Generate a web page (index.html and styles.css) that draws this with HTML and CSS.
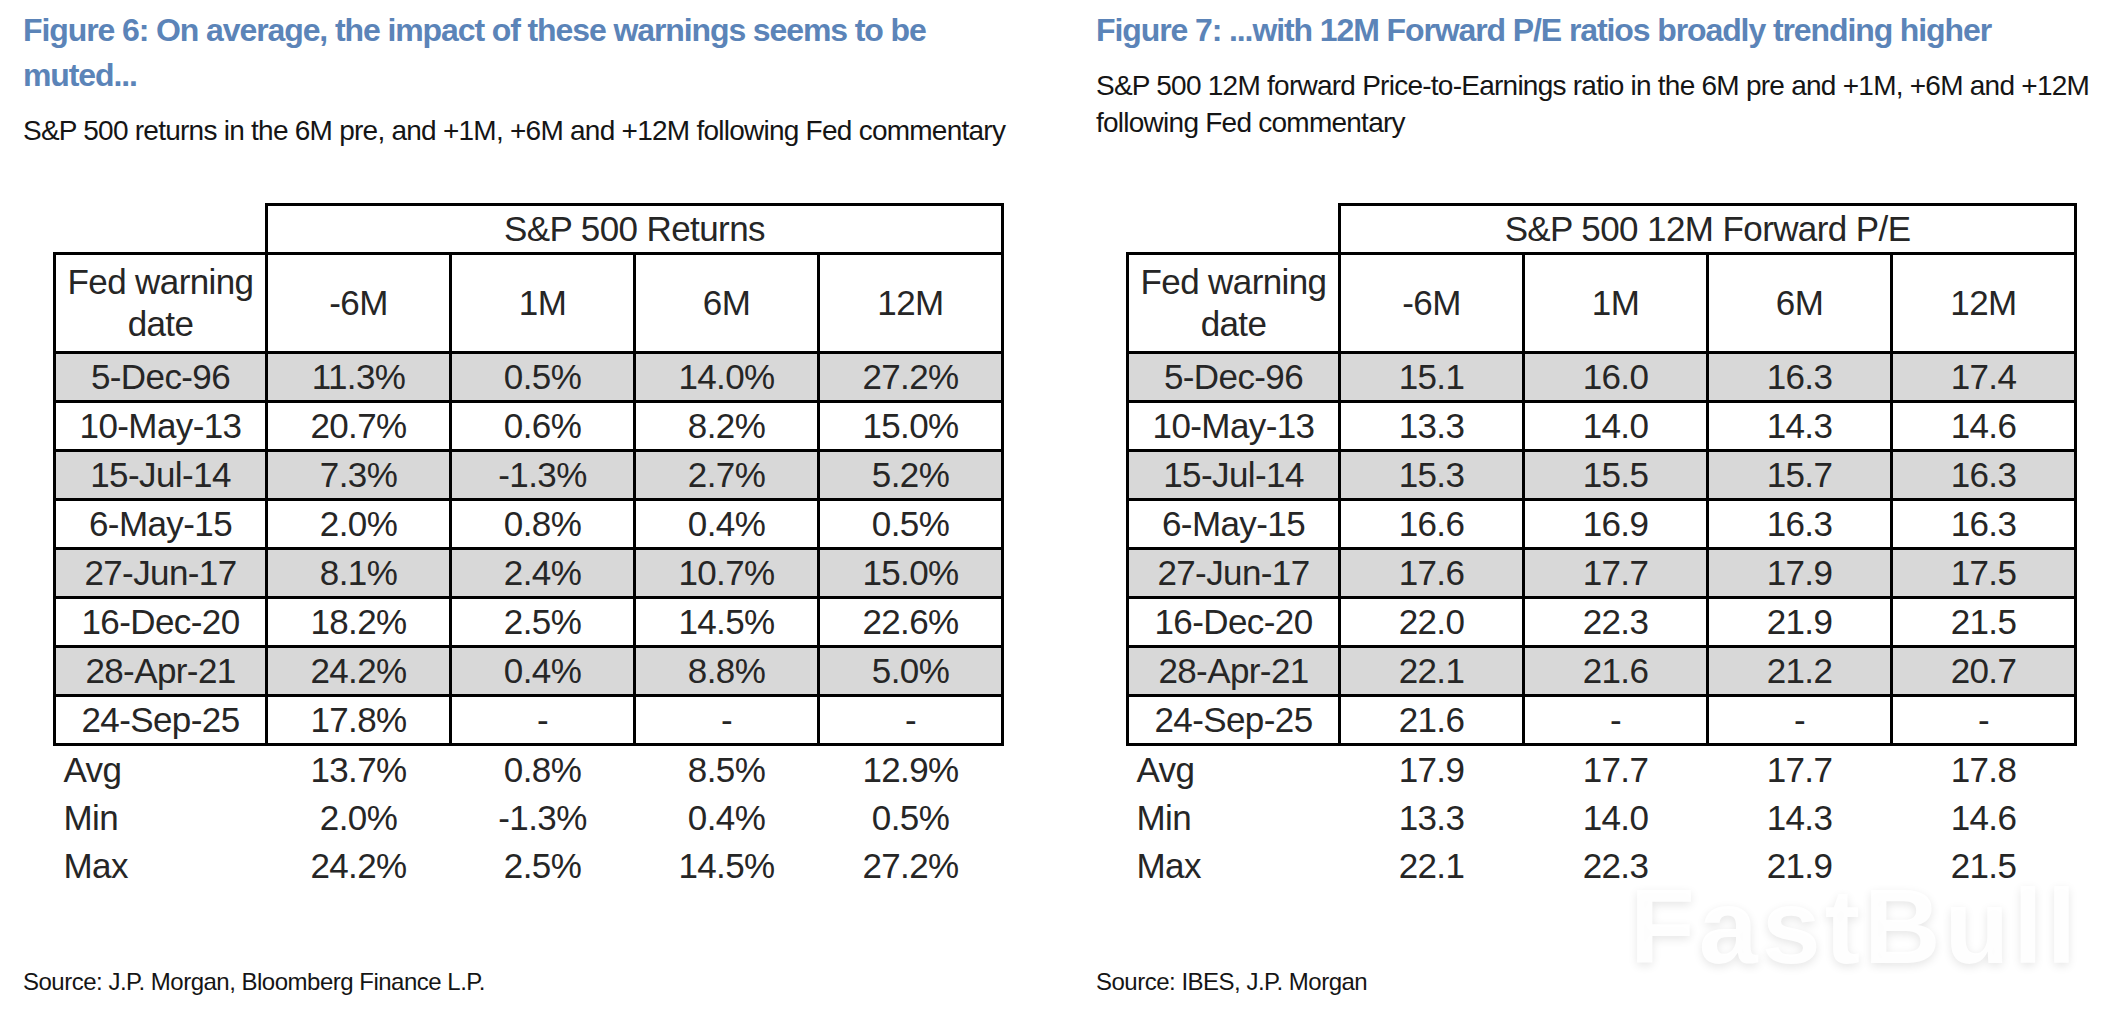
FILE: index.html
```html
<!DOCTYPE html>
<html lang="en">
<head>
<meta charset="utf-8">
<title>Fed warnings and S&amp;P 500</title>
<link rel="stylesheet" href="styles.css">
</head>
<body>
<div class="page">
  <div class="head">
    <h2 class="title">Figure 6: On average, the impact of these warnings seems to be muted...</h2>
    <p class="subtitle">S&amp;P 500 returns in the 6M pre, and +1M, +6M and +12M following Fed commentary</p>
  </div>
  <div class="head head-right">
    <h2 class="title">Figure 7: ...with 12M Forward P/E ratios broadly trending higher</h2>
    <p class="subtitle">S&amp;P 500 12M forward Price-to-Earnings ratio in the 6M pre and +1M, +6M and +12M following Fed commentary</p>
  </div>

  <table class="data">
    <colgroup><col class="c-date"><col class="c-val"><col class="c-val"><col class="c-val"><col class="c-val"></colgroup>
    <thead>
      <tr class="r-group"><th class="blank"></th><th colspan="4">S&amp;P 500 Returns</th></tr>
      <tr class="r-head"><th>Fed warning<br>date</th><th>-6M</th><th>1M</th><th>6M</th><th>12M</th></tr>
    </thead>
    <tbody>
      <tr class="shade"><td>5-Dec-96</td><td>11.3%</td><td>0.5%</td><td>14.0%</td><td>27.2%</td></tr>
      <tr><td>10-May-13</td><td>20.7%</td><td>0.6%</td><td>8.2%</td><td>15.0%</td></tr>
      <tr class="shade"><td>15-Jul-14</td><td>7.3%</td><td>-1.3%</td><td>2.7%</td><td>5.2%</td></tr>
      <tr><td>6-May-15</td><td>2.0%</td><td>0.8%</td><td>0.4%</td><td>0.5%</td></tr>
      <tr class="shade"><td>27-Jun-17</td><td>8.1%</td><td>2.4%</td><td>10.7%</td><td>15.0%</td></tr>
      <tr><td>16-Dec-20</td><td>18.2%</td><td>2.5%</td><td>14.5%</td><td>22.6%</td></tr>
      <tr class="shade"><td>28-Apr-21</td><td>24.2%</td><td>0.4%</td><td>8.8%</td><td>5.0%</td></tr>
      <tr><td>24-Sep-25</td><td>17.8%</td><td>-</td><td>-</td><td>-</td></tr>
    </tbody>
    <tbody class="stats">
      <tr><td>Avg</td><td>13.7%</td><td>0.8%</td><td>8.5%</td><td>12.9%</td></tr>
      <tr><td>Min</td><td>2.0%</td><td>-1.3%</td><td>0.4%</td><td>0.5%</td></tr>
      <tr><td>Max</td><td>24.2%</td><td>2.5%</td><td>14.5%</td><td>27.2%</td></tr>
    </tbody>
  </table>

  <table class="data">
    <colgroup><col class="c-date"><col class="c-val"><col class="c-val"><col class="c-val"><col class="c-val"></colgroup>
    <thead>
      <tr class="r-group"><th class="blank"></th><th colspan="4">S&amp;P 500 12M Forward P/E</th></tr>
      <tr class="r-head"><th>Fed warning<br>date</th><th>-6M</th><th>1M</th><th>6M</th><th>12M</th></tr>
    </thead>
    <tbody>
      <tr class="shade"><td>5-Dec-96</td><td>15.1</td><td>16.0</td><td>16.3</td><td>17.4</td></tr>
      <tr><td>10-May-13</td><td>13.3</td><td>14.0</td><td>14.3</td><td>14.6</td></tr>
      <tr class="shade"><td>15-Jul-14</td><td>15.3</td><td>15.5</td><td>15.7</td><td>16.3</td></tr>
      <tr><td>6-May-15</td><td>16.6</td><td>16.9</td><td>16.3</td><td>16.3</td></tr>
      <tr class="shade"><td>27-Jun-17</td><td>17.6</td><td>17.7</td><td>17.9</td><td>17.5</td></tr>
      <tr><td>16-Dec-20</td><td>22.0</td><td>22.3</td><td>21.9</td><td>21.5</td></tr>
      <tr class="shade"><td>28-Apr-21</td><td>22.1</td><td>21.6</td><td>21.2</td><td>20.7</td></tr>
      <tr><td>24-Sep-25</td><td>21.6</td><td>-</td><td>-</td><td>-</td></tr>
    </tbody>
    <tbody class="stats">
      <tr><td>Avg</td><td>17.9</td><td>17.7</td><td>17.7</td><td>17.8</td></tr>
      <tr><td>Min</td><td>13.3</td><td>14.0</td><td>14.3</td><td>14.6</td></tr>
      <tr><td>Max</td><td>22.1</td><td>22.3</td><td>21.9</td><td>21.5</td></tr>
    </tbody>
  </table>

  <p class="source">Source: J.P. Morgan, Bloomberg Finance L.P.</p>
  <p class="source">Source: IBES, J.P. Morgan</p>

  <div class="watermark">FastBull</div>
</div>
</body>
</html>
```

FILE: styles.css
```css
html, body {
  margin: 0;
  padding: 0;
  background: #ffffff;
}

body {
  font-family: "Liberation Sans", Arial, sans-serif;
  color: #1c1c1c;
}

.page {
  position: relative;
  width: 2126px;
  height: 1034px;
  box-sizing: border-box;
  padding: 8px 0 0 23px;
  display: grid;
  grid-template-columns: 1073px 1030px;
  grid-template-rows: auto auto auto;
  align-content: start;
  align-items: start;
}

.head {
  margin: 0;
}

.title {
  margin: 0;
  max-width: 960px;
  font-size: 32px;
  line-height: 45px;
  font-weight: bold;
  color: #5b84b8;
  letter-spacing: -1.1px;
}

.subtitle {
  margin: 14px 0 0 0;
  font-size: 28px;
  line-height: 37px;
  color: #151515;
  letter-spacing: -0.75px;
}

.data {
  margin: 54px 0 0 30px;
  border-collapse: collapse;
  table-layout: fixed;
  width: 948px;
  font-size: 35px;
  letter-spacing: -0.6px;
  color: #262626;
}

.c-date { width: 212px; }
.c-val { width: 184px; }

.data th,
.data td {
  border: 3px solid #000000;
  padding: 0;
  text-align: center;
  font-weight: normal;
  line-height: 42px;
  height: 46px;
  vertical-align: middle;
}

.data th.blank {
  border: none;
}

.r-head th {
  height: 96px;
}

.shade td {
  background: #d8d8d8;
}

.stats td {
  border: none;
  height: 48px;
}

.stats td:first-child {
  text-align: left;
  padding-left: 9px;
}

.source {
  margin: 77px 0 0 0;
  font-size: 24px;
  line-height: 30px;
  color: #151515;
  letter-spacing: -0.5px;
}

.watermark {
  position: absolute;
  left: 1630px;
  top: 886px;
  font-family: "Liberation Sans", Arial, sans-serif;
  font-weight: bold;
  font-size: 106px;
  line-height: 80px;
  letter-spacing: 4px;
  color: rgba(255, 255, 255, 0.92);
  text-shadow: 0 3px 10px rgba(0, 0, 0, 0.10);
}
```
